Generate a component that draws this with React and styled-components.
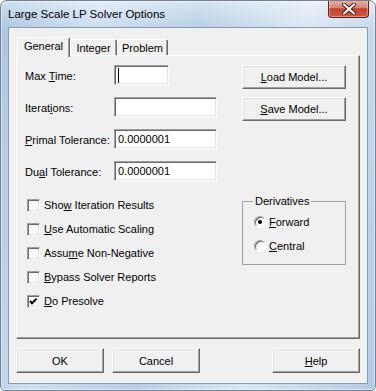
import React from "react";
import styled, { createGlobalStyle } from "styled-components";

const GlobalStyle = createGlobalStyle`
  html, body {
    margin: 0;
    padding: 0;
    background: #fff;
  }
  body {
    font-family: "Liberation Sans", Arial, sans-serif;
    font-size: 11px;
    color: #000;
  }
`;

const Window = styled.div`
  width: 376px;
  height: 391px;
  box-sizing: border-box;
  border: 1px solid #6f8092;
  border-radius: 7px 7px 5px 5px;
  background: linear-gradient(180deg, rgba(255, 255, 255, 0.45), rgba(255, 255, 255, 0) 28px),
    linear-gradient(100deg, #a9c5e2 0%, #cddef0 22%, #b6cee7 45%, #dae6f3 70%, #b2cbe5 100%);
  box-shadow: inset 0 0 0 1px rgba(255, 255, 255, 0.55);
  display: flex;
  flex-direction: column;
  padding: 0 7px 6px;
  overflow: hidden;
`;

const TitleBar = styled.div`
  height: 26px;
  flex-shrink: 0;
  display: flex;
  align-items: flex-start;
`;

const Title = styled.div`
  margin-top: 6px;
  font-size: 11.5px;
  line-height: 14px;
`;

const CloseButton = styled.div`
  margin-left: auto;
  margin-top: -1px;
  margin-right: -1px;
  width: 41px;
  height: 18px;
  box-sizing: border-box;
  border: 1px solid #5e2119;
  border-top: none;
  border-radius: 0 0 4px 4px;
  background: linear-gradient(180deg, #e9b1a7 0%, #d98476 45%, #c3412f 52%, #cf5a43 100%);
  box-shadow: inset 0 0 0 1px rgba(255, 255, 255, 0.35);
  display: flex;
  align-items: center;
  justify-content: center;
`;

const Client = styled.div`
  flex: 1;
  background: #f0f0f0;
  border: 1px solid #8a9bb0;
  padding: 9px 7px 0;
  display: flex;
  flex-direction: column;
`;

const Tabs = styled.div`
  display: flex;
  align-items: flex-end;
  height: 18px;
  padding-left: 1px;
`;

const Tab = styled.div`
  position: relative;
  z-index: ${(p) => (p.$active ? 2 : 1)};
  box-sizing: border-box;
  width: ${(p) => p.$w}px;
  height: ${(p) => (p.$active ? 20 : 16)}px;
  margin-bottom: ${(p) => (p.$active ? -2 : 0)}px;
  padding-bottom: ${(p) => (p.$active ? 4 : 0)}px;
  background: #f0f0f0;
  border-top: 1px solid #fff;
  border-left: 1px solid #fff;
  border-right: 1px solid #696969;
  box-shadow: inset -1px 0 #a0a0a0;
  border-radius: 2px 2px 0 0;
  display: flex;
  align-items: center;
  justify-content: center;
`;

const Panel = styled.div`
  box-sizing: border-box;
  height: 284px;
  border: 1px solid;
  border-color: #fff #696969 #696969 #fff;
  box-shadow: inset -1px -1px #a0a0a0;
  padding: 9px 0 0 8px;
  display: grid;
  grid-template-columns: 217px 104px;
  align-items: start;
`;

const Column = styled.div`
  display: flex;
  flex-direction: column;
`;

const Fields = styled.div`
  display: grid;
  gap: 12px;
`;

const FieldRow = styled.div`
  display: flex;
  align-items: center;
  height: 20px;
`;

const Label = styled.div`
  width: 89px;
  line-height: 13px;
  padding-top: 3px;
`;

const TextBox = styled.div`
  box-sizing: border-box;
  width: ${(p) => p.$w}px;
  height: 20px;
  background: #fff;
  border: 1px solid;
  border-color: #a0a0a0 #fff #fff #a0a0a0;
  box-shadow: inset 1px 1px #696969, inset -1px -1px #e3e3e3;
  padding-left: 3px;
  display: flex;
  align-items: center;
`;

const Caret = styled.span`
  width: 1px;
  height: 15px;
  background: #000;
`;

const Checks = styled.div`
  margin-top: 16px;
  display: grid;
  gap: 8px;
  padding-left: 2px;
`;

const CheckRow = styled.div`
  display: flex;
  align-items: center;
  gap: 4px;
  height: 16px;
`;

const Box = styled.span`
  box-sizing: border-box;
  width: 13px;
  height: 13px;
  background: #fff;
  border: 1px solid;
  border-color: #a0a0a0 #fff #fff #a0a0a0;
  box-shadow: inset 1px 1px #696969, inset -1px -1px #e3e3e3;
  display: flex;
`;

const Button = styled.div`
  box-sizing: border-box;
  width: ${(p) => p.$w}px;
  height: ${(p) => p.$h}px;
  background: #f0f0f0;
  border: 1px solid;
  border-color: #fff #696969 #696969 #fff;
  box-shadow: inset -1px -1px #a0a0a0, inset 1px 1px #e3e3e3;
  display: flex;
  align-items: center;
  justify-content: center;
`;

const Buttons = styled.div`
  display: grid;
  gap: 8px;
`;

const Group = styled.fieldset`
  margin: 74px 0 0;
  box-sizing: border-box;
  width: 104px;
  min-width: 0;
  padding: 6px 0 10px 11px;
  border: 1px solid #a0a0a0;
  display: grid;
  gap: 8px;
`;

const Legend = styled.legend`
  padding: 0 2px;
  margin-left: -1px;
  line-height: 13px;
`;

const RadioRow = styled.div`
  display: flex;
  align-items: center;
  gap: 3px;
  height: 16px;
`;

const Radio = styled.span`
  box-sizing: border-box;
  width: 12px;
  height: 12px;
  border-radius: 50%;
  background: #fff;
  border: 1px solid;
  border-color: #a0a0a0 #fff #fff #a0a0a0;
  box-shadow: inset 1px 1px #696969;
  display: flex;
  align-items: center;
  justify-content: center;
  &::after {
    content: "";
    width: 4px;
    height: 4px;
    border-radius: 50%;
    background: ${(p) => (p.$on ? "#000" : "transparent")};
  }
`;

const BottomBar = styled.div`
  display: flex;
  gap: 8px;
  margin-top: 9px;
`;

const Spacer = styled.div`
  flex: 1;
`;

const U = styled.span`
  text-decoration: underline;
  text-underline-offset: 1px;
`;

const Check = ({ on, children }) => (
  <CheckRow>
    <Box>
      {on && (
        <svg width="11" height="11" viewBox="0 0 11 11">
          <polyline points="2,5 4,7.2 8.6,2.6" fill="none" stroke="#000" strokeWidth="2" />
        </svg>
      )}
    </Box>
    <span>{children}</span>
  </CheckRow>
);

export default function App() {
  return (
    <>
      <GlobalStyle />
      <Window>
        <TitleBar>
          <Title>Large Scale LP Solver Options</Title>
          <CloseButton>
            <svg width="14" height="12" viewBox="0 0 14 12">
              <path d="M2 1.5 L12 10.5 M12 1.5 L2 10.5" stroke="#4a1810" strokeWidth="4" strokeLinecap="round" />
              <path d="M2 1.5 L12 10.5 M12 1.5 L2 10.5" stroke="#fff" strokeWidth="2.2" strokeLinecap="round" />
            </svg>
          </CloseButton>
        </TitleBar>
        <Client>
          <Tabs>
            <Tab $active $w={53}>General</Tab>
            <Tab $w={47}>Integer</Tab>
            <Tab $w={51}>Problem</Tab>
          </Tabs>
          <Panel>
            <Column>
              <Fields>
                <FieldRow>
                  <Label>Max <U>T</U>ime:</Label>
                  <TextBox $w={55}><Caret /></TextBox>
                </FieldRow>
                <FieldRow>
                  <Label>Iterat<U>i</U>ons:</Label>
                  <TextBox $w={103} />
                </FieldRow>
                <FieldRow>
                  <Label><U>P</U>rimal Tolerance:</Label>
                  <TextBox $w={103}>0.0000001</TextBox>
                </FieldRow>
                <FieldRow>
                  <Label>Du<U>a</U>l Tolerance:</Label>
                  <TextBox $w={103}>0.0000001</TextBox>
                </FieldRow>
              </Fields>
              <Checks>
                <Check>Sho<U>w</U> Iteration Results</Check>
                <Check><U>U</U>se Automatic Scaling</Check>
                <Check>Assu<U>m</U>e Non-Negative</Check>
                <Check><U>B</U>ypass Solver Reports</Check>
                <Check on><U>D</U>o Presolve</Check>
              </Checks>
            </Column>
            <Column>
              <Buttons>
                <Button $w={104} $h={24}><span><U>L</U>oad Model...</span></Button>
                <Button $w={104} $h={24}><span><U>S</U>ave Model...</span></Button>
              </Buttons>
              <Group>
                <Legend>Derivatives</Legend>
                <RadioRow>
                  <Radio $on />
                  <span><U>F</U>orward</span>
                </RadioRow>
                <RadioRow>
                  <Radio />
                  <span><U>C</U>entral</span>
                </RadioRow>
              </Group>
            </Column>
          </Panel>
          <BottomBar>
            <Button $w={88} $h={25}>OK</Button>
            <Button $w={88} $h={25}>Cancel</Button>
            <Spacer />
            <Button $w={88} $h={25}><span><U>H</U>elp</span></Button>
          </BottomBar>
        </Client>
      </Window>
    </>
  );
}
